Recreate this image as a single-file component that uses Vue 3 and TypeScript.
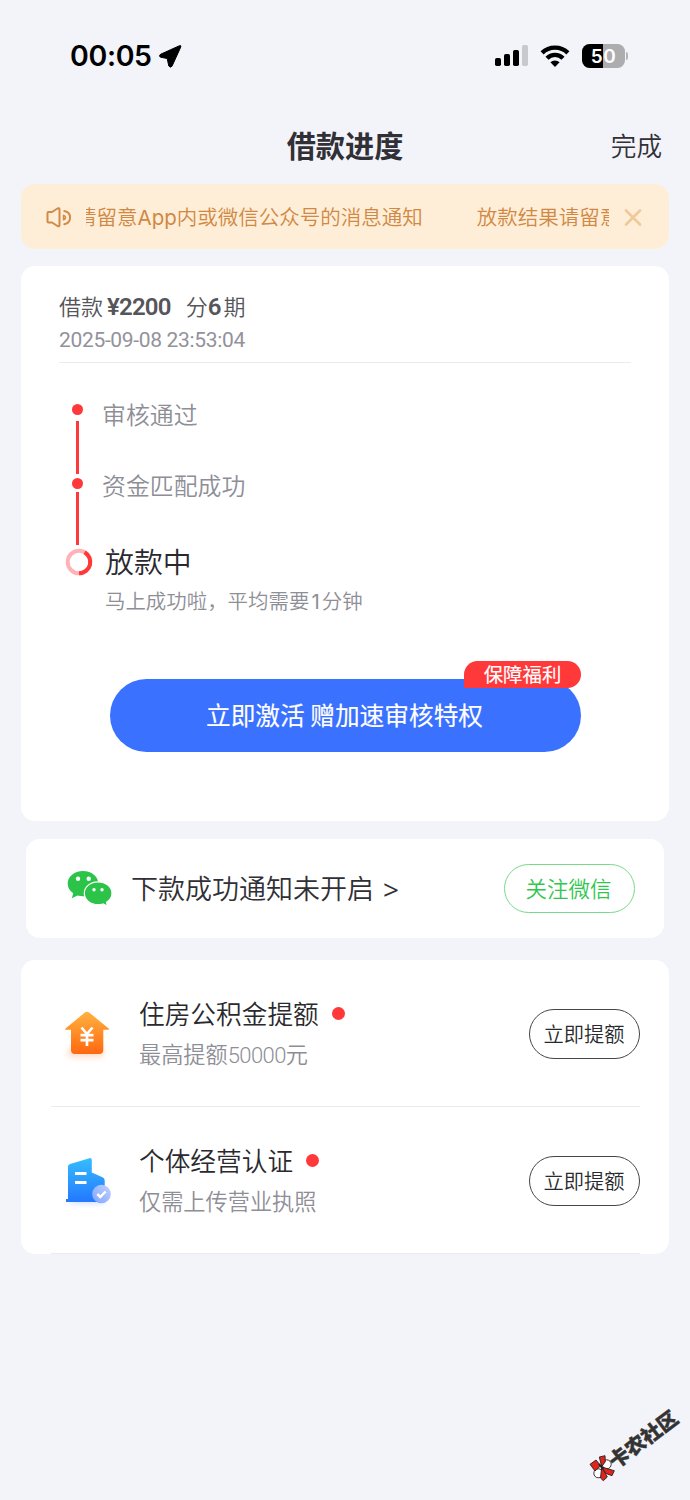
<script setup lang="ts">
interface Offer {
  id: 'house' | 'business'
  title: string
  prefix: string
  amount: string
  suffix: string
}

const steps: string[] = ['审核通过', '资金匹配成功']

const offers: Offer[] = [
  { id: 'house', title: '住房公积金提额', prefix: '最高提额', amount: '50000', suffix: '元' },
  { id: 'business', title: '个体经营认证', prefix: '仅需上传营业执照', amount: '', suffix: '' },
]
</script>

<template>
  <div class="page">
    <header class="status">
      <span class="time">00:05</span>
      <svg class="arrow" width="24" height="24" viewBox="0 0 24 24">
        <path d="M21.500 1.700 2.500 10.300Q.5 12 2.500 13.200L9.200 14.500 10.800 22Q12.300 24.200 14 22.200L22.800 2.900Q23.200 1.100 21.500 1.700Z" stroke="#000" stroke-width="1" stroke-linejoin="round" />
      </svg>
      <span class="spacer"></span>
      <svg class="signal" width="34" height="24" viewBox="0 0 34 24">
        <rect x="0" y="14" width="6" height="8" rx="1.700" />
        <rect x="9" y="10" width="6" height="12" rx="1.700" />
        <rect x="18" y="6" width="6" height="16" rx="1.700" />
        <rect x="27" y="1" width="6" height="21" rx="1.700" fill="#c8c9cc" />
      </svg>
      <svg class="wifi" width="30" height="24" viewBox="0 0 30 24">
        <g fill="none" stroke="#000" stroke-width="4.400">
          <path d="M2.100 8.900a18.400 18.400 0 0 1 25.800 0" />
          <path d="M7 14.200a11.400 11.400 0 0 1 16 0" />
        </g>
        <path d="M15 22.900 10.400 18.300a6.500 6.500 0 0 1 9.200 0Z" />
      </svg>
      <span class="battery">50</span>
      <i class="battery-tip"></i>
    </header>

    <nav class="nav">
      <span></span>
      <h1>借款进度</h1>
      <span class="done">完成</span>
    </nav>

    <section class="notice">
      <svg class="speaker" width="26" height="22" viewBox="0 0 26 22" fill="none" stroke="#d08b46" stroke-width="2" stroke-linejoin="round" stroke-linecap="round">
        <path d="M2.500 6H6L11.500 2.500Q13.500 1.500 13.500 3.500V19Q13.500 21 11.500 20L6 16.500H2.500Q1.500 16.500 1.500 15.500V7Q1.500 6 2.500 6Z" />
        <path d="M18.300 5C26 6.500 26 16.500 18.300 18.200" />
        <path d="M17.500 9.200C20.200 10 20.200 13 17.500 13.800Z" stroke-width="1.500" />
      </svg>
      <div class="ticker">
        <div class="track">
          <span>请留意<b class="latin">App</b>内或微信公众号的消息通知</span>
          <span>放款结果请留意</span>
        </div>
      </div>
      <svg class="close" width="18" height="18" viewBox="0 0 18 18">
        <path d="m2 2.500 14 14M16 2.500l-14 14" stroke="#efc99b" stroke-width="2.600" stroke-linecap="round" />
      </svg>
    </section>

    <section class="card loan">
      <div class="summary">
        <p class="amount">借款<b>¥2200</b><span class="term">分<b>6</b>期</span></p>
        <p class="date">2025-09-08 23:53:04</p>
      </div>
      <div class="progress">
        <div class="rail">
          <template v-for="s in steps" :key="s">
            <i class="dot"></i><i class="line"></i>
          </template>
          <svg class="ring" width="28" height="28" viewBox="0 0 28 28" fill="none" stroke-width="4">
            <circle cx="14" cy="14" r="11.300" stroke="#ffb3b6" />
            <path d="M19.600 4.200A11.300 11.300 0 0 1 14 25.300" stroke="#ff383a" />
          </svg>
        </div>
        <div class="labels">
          <p v-for="s in steps" :key="s" class="step">{{ s }}</p>
          <p class="current">放款中</p>
          <p class="hint">马上成功啦，平均需要<b class="latin">1</b>分钟</p>
        </div>
      </div>
      <button class="activate">立即激活 赠加速审核特权<span class="badge">保障福利</span></button>
    </section>

    <section class="card wechat">
      <svg width="45" height="36" viewBox="0 0 45 36">
        <path d="M16 0C7.500 0 .7 5.500 .7 12.500c0 4 2 7.500 5.500 9.700L4.900 27.300 10.500 24.500C12.300 25 14.200 25.300 16 25.300 24.500 25.300 31.300 19.500 31.300 12.500S24.500 0 16 0Z" fill="#2bc448" />
        <path d="M31 10.800C23.500 10.800 17.300 15.900 17.300 22.300S23.500 33.700 31 33.700C32.700 33.700 34.500 33.400 36 33L40.500 35 39.500 31.200C42.800 29.200 45 26.200 45 22.300 45 15.900 38.700 10.800 31 10.800Z" fill="#2bc448" stroke="#fff" stroke-width="1.200" />
        <g fill="#fff"><circle cx="11" cy="7.700" r="2.200" /><circle cx="21.700" cy="7.700" r="2.200" /><circle cx="27" cy="18.700" r="1.700" /><circle cx="35" cy="18.700" r="1.700" /></g>
      </svg>
      <span class="wechat-text">下款成功通知未开启</span><span class="gt">&gt;</span>
      <button class="follow">关注微信</button>
    </section>

    <section class="card offers">
      <div v-for="o in offers" :key="o.id" class="offer">
        <svg v-if="o.id === 'house'" class="icon" width="60" height="60" viewBox="0 0 60 60">
          <defs>
            <linearGradient id="house-fill" x1="0" y1="0" x2="0" y2="1"><stop offset="0" stop-color="#ffb23f" /><stop offset="1" stop-color="#ff6810" /></linearGradient>
            <filter id="soft" x="-30%" y="-80%" width="160%" height="260%"><feGaussianBlur stdDeviation="3" /></filter>
          </defs>
          <rect x="10" y="43" width="36" height="9" rx="4" fill="#ff7a2a" opacity=".28" filter="url(#soft)" />
          <path d="M26.500 7.800Q29 5.700 31.500 7.800L50.700 23.500Q51.500 24.800 50 24.800H45.300V45Q45.300 49 41.300 49H17Q13 49 13 45V24.800H8.200Q6.500 24.800 7.500 23.500Z" fill="url(#house-fill)" />
          <path d="m23.500 22.500 5.500 6.500 5.500-6.500M22.500 30.200h13M22.500 35.200h13M29 29v12" fill="none" stroke="#fff" stroke-width="2.700" />
        </svg>
        <svg v-else class="icon" width="60" height="60" viewBox="0 0 60 60">
          <defs>
            <linearGradient id="tower-fill" x1="0" y1="0" x2="0" y2="1"><stop offset="0" stop-color="#35bdff" /><stop offset="1" stop-color="#2378ff" /></linearGradient>
            <linearGradient id="seal-fill" x1="1" y1="0" x2="0" y2="1"><stop offset="0" stop-color="#c3d1ff" /><stop offset="1" stop-color="#7fa5ff" /></linearGradient>
          </defs>
          <rect x="12" y="44" width="34" height="7" rx="3" fill="#3f6dff" opacity=".28" filter="url(#soft)" />
          <path d="M10 14.500Q10 12.500 12 11.900L31.500 6.200Q33.800 5.700 33.800 8V20.500L44.500 25.200Q46.700 26.300 46.700 28.500V50H8V47H10Z" fill="url(#tower-fill)" />
          <path d="M17 21.500h11.500M17 30.500h11.500" stroke="#fff" stroke-width="3" />
          <circle cx="43.500" cy="42" r="9.300" fill="url(#seal-fill)" />
          <path d="m39.300 42 3 3 5.300-5.500" fill="none" stroke="#fff" stroke-width="2.500" />
        </svg>
        <div class="copy">
          <p class="title">{{ o.title }}<i class="red"></i></p>
          <p class="sub">{{ o.prefix }}<span v-if="o.amount" class="num">{{ o.amount }}</span>{{ o.suffix }}</p>
        </div>
        <button class="raise">立即提额</button>
      </div>
    </section>

    <div class="watermark">
      <svg width="28" height="27" viewBox="0 0 28 27" stroke="#222" stroke-width=".9">
        <circle cx="17.700" cy="9.300" r="4.500" fill="#fff" /><circle cx="9.300" cy="18.300" r="4.500" fill="#fff" />
        <g fill="#e2231a">
          <path d="m1 9.300 6-4.300 4.700 5.700L6 16Z" /><path d="M10.300 2 16 .7l.3 6-3.600 5Z" /><path d="m12.700 12 12.600 3.700-2.300 5-6-2.200Z" /><path d="m12.700 12 5.600 10-4 3.700-2.800-2.700Z" />
        </g>
        <path d="m10 9 4 5" stroke-width="2" />
      </svg>
      <span>卡农社区</span>
    </div>
  </div>
</template>

<style>
body { background: #f3f4f9; }
</style>

<style scoped>
.page { position: relative; width: 690px; height: 1500px; overflow: hidden; background: #f3f4f9; font-family: "Noto Sans CJK SC", sans-serif; font-weight: 350; color: #303036; }
.page * { box-sizing: border-box; }
p, h1 { margin: 0; white-space: nowrap; }
button { font: inherit; padding: 0; margin: 0; white-space: nowrap; }
svg { display: block; flex: none; }
i { display: block; flex: none; }
.latin { font-family: Inter, sans-serif; font-weight: 400; }

.status { display: flex; align-items: center; height: 112px; padding: 0 62px 0 70px; color: #000; }
.time { font: 600 28.500px/34px Inter, sans-serif; letter-spacing: -.35px; }
.arrow { margin-left: 6px; }
.spacer { flex: 1; }
.signal { margin-right: 11px; }
.wifi { margin-right: 12px; }
.battery { width: 43px; height: 24px; border-radius: 7.500px; background: linear-gradient(90deg, #000 50%, #adadaf 50%); color: #fff; font: 600 19px/25px Inter, sans-serif; letter-spacing: .6px; text-align: center; }
.battery-tip { width: 2px; height: 8px; margin-left: 1px; border-radius: 0 3px 3px 0; background: #b5b5b8; }

.nav { display: grid; grid-template-columns: 1fr auto 1fr; align-items: center; height: 66px; padding: 0 28px; }
.nav h1 { margin-top: -2px; font-size: 29.200px; line-height: 40px; font-weight: 700; }
.done { justify-self: end; margin-top: -1px; font-size: 25.600px; line-height: 40px; }

.notice { display: flex; align-items: center; width: 648px; height: 65px; margin: 6px 0 0 21px; padding: 0 27px 0 25px; border-radius: 14px; background: #ffeed7; color: #cf8944; }
.ticker { width: 523px; height: 32px; margin-left: 14px; overflow: hidden; }
.track { display: flex; gap: 54px; width: max-content; margin-left: -10px; font-size: 20.500px; line-height: 30px; white-space: nowrap; }
.close { margin-left: 15px; }

.card { background: #fff; border-radius: 14px; }
.loan { width: 648px; height: 555px; margin: 17px 0 0 21px; padding: 24px 38px 0; }
.summary { height: 73px; border-bottom: 1px solid #ececee; }
.amount { height: 33px; font-size: 22px; line-height: 31px; color: #55555a; }
.amount b { font: 600 24px/24px Roboto, sans-serif; letter-spacing: -.8px; margin-left: 4px; }
.term { margin-left: 15px; }
.amount .term b { margin: 0 3px 0 0; }
.date { font: 400 21px/34px Roboto, sans-serif; letter-spacing: -.33px; color: #92929a; }

.progress { display: flex; padding: 41px 0 0 6px; }
.rail { display: flex; flex-direction: column; align-items: center; width: 28px; }
.dot { width: 11px; height: 11px; margin-right: 3px; border-radius: 50%; background: #ff383a; }
.line { width: 3px; height: 53px; margin: 6px 3px 4px 0; background: #ff383a; }
.line:nth-of-type(4) { margin: 3px 3px 3px 0; }
.labels { margin-left: 9px; }
.step { height: 71px; font-size: 23.900px; line-height: 30px; margin-top: -5px; color: #8e8e96; }
.step + .step { margin-top: 0; }
.current { margin: -1px 0 0 3px; font-size: 28.900px; line-height: 40px; color: #29292e; }
.hint { margin: 4px 0 0 3px; font-size: 20.450px; line-height: 32px; color: #8e8e96; }
.hint .latin { margin: 0 2px; }
.activate { position: relative; display: block; width: 471px; height: 73px; margin: 61px 0 0 51px; border: 0; border-radius: 37px; background: #3a71ff; color: #fff; font-size: 24.700px; font-weight: 400; line-height: 70px; padding: 0 2px 3px 0; -webkit-text-stroke: .15px #fff; }
.badge { position: absolute; right: 0; top: -18px; width: 117px; height: 27px; border-radius: 14px 14px 14px 0; background: #ff383a; font-size: 19.400px; line-height: 25px; }

.wechat { display: flex; align-items: center; width: 638px; height: 99px; margin: 18px 0 0 26px; padding: 0 29px 0 41px; }
.wechat-text { margin: -2px 0 0 19px; font-size: 27px; line-height: 40px; }
.gt { margin-left: 9px; font: 400 28px/40px "Open Sans", sans-serif; }
.follow { width: 131px; height: 49px; margin-left: auto; border: 1px solid #79d98b; border-radius: 25px; background: #fff; color: #32c650; font-size: 21.500px; line-height: 44px; padding: 0 2px 2px 0; }

.offers { width: 648px; height: 294px; margin: 22px 0 0 21px; padding: 0 29px 0 30px; }
.offer { display: flex; align-items: center; height: 147px; border-bottom: 1px solid #ececee; }
.icon { margin: 4px 0 0 7px; }
.copy { margin: 0 auto 0 21px; }
.title { display: flex; align-items: center; font-size: 25.700px; line-height: 40px; color: #29292e; }
.red { width: 13px; height: 13px; margin-left: 13px; border-radius: 50%; background: #ff383a; }
.sub { font-size: 22.200px; line-height: 40px; color: #8e8e96; }
.num { font: 350 22px/30px Roboto, sans-serif; letter-spacing: -.6px; }
.raise { width: 111px; height: 50px; margin-top: 1px; border: 1px solid #45454a; border-radius: 25px; background: #fff; color: #29292e; font-size: 20.300px; line-height: 44px; padding: 0 1px 1px 0; }

.watermark { position: absolute; left: 589px; top: 1455px; display: flex; color: #333; }
.watermark span { position: absolute; left: 22px; top: -4px; transform: rotate(-37deg); transform-origin: 0 50%; font-size: 20px; line-height: 24px; font-weight: 900; white-space: nowrap; -webkit-text-stroke: .4px #333; }
</style>
